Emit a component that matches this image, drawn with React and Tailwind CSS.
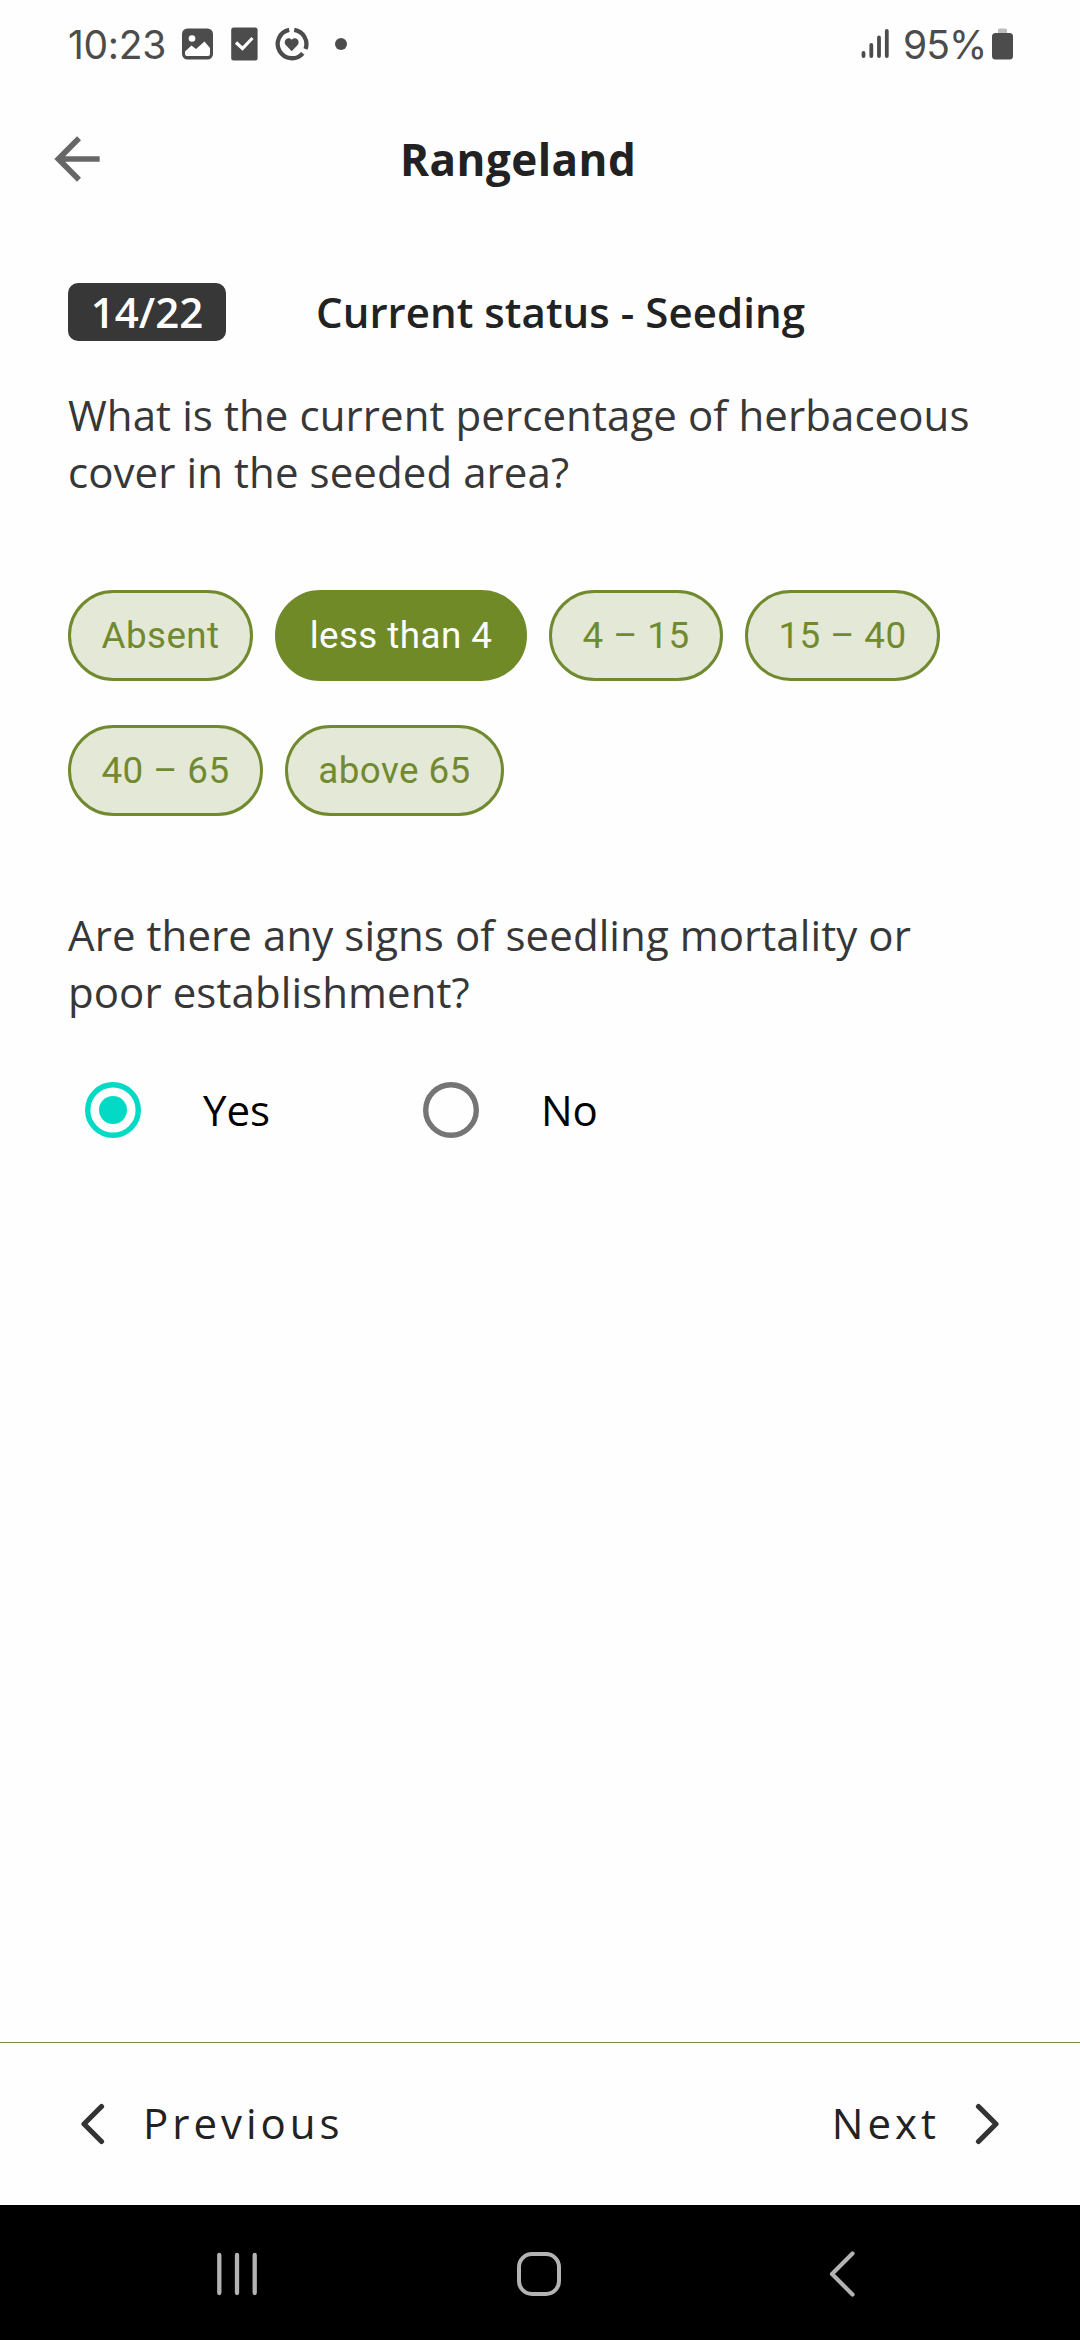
function StatusBar() {
  return (
    <div className="flex h-[88px] items-center pl-[68px] pr-[67px] text-[#4c4c4c]">
      <span className="w-[114px] whitespace-nowrap pt-px font-['Inter',sans-serif] text-[39px] leading-[48px] tracking-[-0.3px]">10:23</span>
      <svg className="h-8 w-8 shrink-0" viewBox="0 0 32 32">
        <rect x="0" y="0.5" width="31" height="31" rx="5.5" fill="#4c4c4c" />
        <circle cx="10" cy="10.5" r="3.3" fill="#fefefe" />
        <path d="M3 23.500 L9.500 17.500 L14 21 L22.500 13.500 L28 20 V26 Q28 28 26 28 H5 Q3 28 3 26 Z" fill="#fefefe" />
      </svg>
      <svg className="ml-[17px] h-[34px] w-[27px] shrink-0" viewBox="0 0 27 34">
        <rect x="0.2" y="0.5" width="26.4" height="33" rx="2.5" fill="#4c4c4c" />
        <path d="M5 15.500 L11.500 21.500 L21.500 11" fill="none" stroke="#fefefe" strokeWidth="3.2" />
      </svg>
      <svg className="ml-[17px] h-[34px] w-[34px] shrink-0" viewBox="0 0 34 34">
        <path d="M14.200 2.900 A14.300 14.300 0 1 0 27.800 26.300" fill="none" stroke="#4c4c4c" strokeWidth="4.3" />
        <path d="M19.200 2.900 A14.300 14.300 0 0 1 30.500 22" fill="none" stroke="#4c4c4c" strokeWidth="4.3" />
        <path d="M16.700 24.200 L11 18.300 C7.500 14.500 12 8.500 16.700 12.700 C21.400 8.500 25.900 14.500 22.400 18.300 Z" fill="#4c4c4c" />
      </svg>
      <span className="ml-[26px] size-3 rounded-full bg-[#4c4c4c]" />
      <div className="ml-auto flex items-center">
        <svg className="h-[30px] w-7" viewBox="0 0 28 30" stroke="#4c4c4c" strokeWidth="3.8" strokeLinecap="round">
          <path d="M2.500 24 V27 M10.300 16 V27 M18 8.500 V27 M25.800 2 V27" />
        </svg>
        <span className="ml-[14px] w-[89px] whitespace-nowrap pt-px font-['Inter',sans-serif] text-[39px] leading-[48px] tracking-[-1px]">95%</span>
        <svg className="h-8 w-[21px]" viewBox="0 0 21 32">
          <rect x="6" y="0.500" width="9" height="8" rx="1.500" fill="#bdbdbd" />
          <rect x="0" y="5" width="21" height="26.500" rx="3.500" fill="#4c4c4c" />
        </svg>
      </div>
    </div>
  );
}

function Header() {
  return (
    <header className="flex h-[141px] items-center pl-[43px]">
      <svg className="h-[68px] w-[68px]" viewBox="0 0 24 24" fill="#676767">
        <path d="M20 11H7.830l5.590-5.590L12 4l-8 8 8 8 1.410-1.410L7.830 13H20v-2z" />
      </svg>
      <h1 className="ml-[288px] pl-px pt-px text-[44px] font-bold leading-[60px] tracking-[0.45px] text-[#222]">Rangeland</h1>
    </header>
  );
}

function Chip({ label, width, selected }) {
  const tone = selected
    ? "border-[#718a28] bg-[#718a28] text-white"
    : "border-[#718a30] bg-[#e4e8d7] text-[#718a30]";
  return (
    <button
      className={`flex h-[91px] shrink-0 items-center justify-center whitespace-nowrap rounded-full border-[3px] font-['Roboto',sans-serif] text-[36.75px] tracking-[0.45px] ${width} ${tone}`}
    >
      {label}
    </button>
  );
}

function Radio({ label, checked }) {
  return (
    <label className="flex w-[338px] items-center pl-[17px] text-[42px] leading-[57px] text-black">
      <svg className="h-14 w-14" viewBox="0 0 56 56">
        <circle cx="28" cy="28" r="25.300" fill="none" stroke={checked ? "#03dac5" : "#757575"} strokeWidth="5.400" />
        {checked && <circle cx="28" cy="28" r="14" fill="#03dac5" />}
      </svg>
      <span className="ml-[62px]">{label}</span>
    </label>
  );
}

const options = [
  { label: "Absent", width: "w-[185px]" },
  { label: "less than 4", width: "w-[252px]", selected: true },
  { label: "4 – 15", width: "w-[174px]" },
  { label: "15 – 40", width: "w-[195px]" },
  { label: "40 – 65", width: "w-[195px]" },
  { label: "above 65", width: "w-[219px]" },
];

export default function App() {
  return (
    <div className="flex h-[2340px] w-[1080px] flex-col overflow-hidden bg-[#fefefe] font-['Open_Sans',sans-serif]">
      <StatusBar />
      <Header />
      <main className="flex-1 px-[68px] pt-[54px]">
        <div className="flex h-[58px] items-center text-[42px] font-semibold leading-[57px]">
          <span className="flex h-[58px] w-[158px] items-center justify-center rounded-[10px] bg-[#373737] pb-[2px] text-white">14/22</span>
          <h2 className="ml-[90px] whitespace-nowrap pb-[2px] tracking-[0.05px] text-[#222]">Current status - Seeding</h2>
        </div>
        <p className="mt-[45px] whitespace-nowrap text-[42px] leading-[57px] tracking-[0.08px] text-[#373737]">
          What is the current percentage of herbaceous
          <br />
          cover in the seeded area?
        </p>
        <div className="mt-[90px] flex flex-wrap gap-x-[22px] gap-y-11">
          {options.map((o) => (
            <Chip key={o.label} {...o} />
          ))}
        </div>
        <p className="mt-[90px] whitespace-nowrap text-[42px] leading-[57px] tracking-[0.08px] text-[#373737]">
          Are there any signs of seedling mortality or
          <br />
          poor establishment?
        </p>
        <div className="mt-[61px] flex">
          <Radio label="Yes" checked />
          <Radio label="No" />
        </div>
      </main>
      <footer className="flex h-[163px] shrink-0 items-center justify-between border-t border-[#778a4c] pl-[80px] pr-[80px] text-[42px] leading-[57px] tracking-[4.000px] text-[#222]">
        <div className="flex items-center">
          <svg className="h-[42px] w-[26px]" viewBox="0 0 26 42" fill="none" stroke="#333" strokeWidth="5.200" strokeLinecap="round" strokeLinejoin="round">
            <path d="M21.500 3.500 L4 21 L21.500 38.500" />
          </svg>
          <span className="ml-[37px] pb-[3px]">Previous</span>
        </div>
        <div className="flex items-center">
          <span className="mr-[34px] pb-[3px]">Next</span>
          <svg className="h-[42px] w-[26px]" viewBox="0 0 26 42" fill="none" stroke="#333" strokeWidth="5.200" strokeLinecap="round" strokeLinejoin="round">
            <path d="M4.500 3.500 L22 21 L4.500 38.500" />
          </svg>
        </div>
      </footer>
      <nav className="flex h-[135px] shrink-0 items-center bg-black pl-[216px] pt-[3px]">
        <svg className="h-[46px] w-[42px]" viewBox="0 0 42 46" stroke="#b3b3b3" strokeWidth="4.300" strokeLinecap="round">
          <path d="M3.300 4 V42 M21 4 V42 M38.700 4 V42" />
        </svg>
        <span className="ml-[259px] size-11 rounded-[15px] border-4 border-[#b3b3b3]" />
        <svg className="ml-[266px] h-[46px] w-[28px]" viewBox="0 0 28 46" fill="none" stroke="#b3b3b3" strokeWidth="4.200" strokeLinecap="round" strokeLinejoin="round">
          <path d="M25.500 2.500 L5 23 L25.500 43.500" />
        </svg>
      </nav>
    </div>
  );
}
